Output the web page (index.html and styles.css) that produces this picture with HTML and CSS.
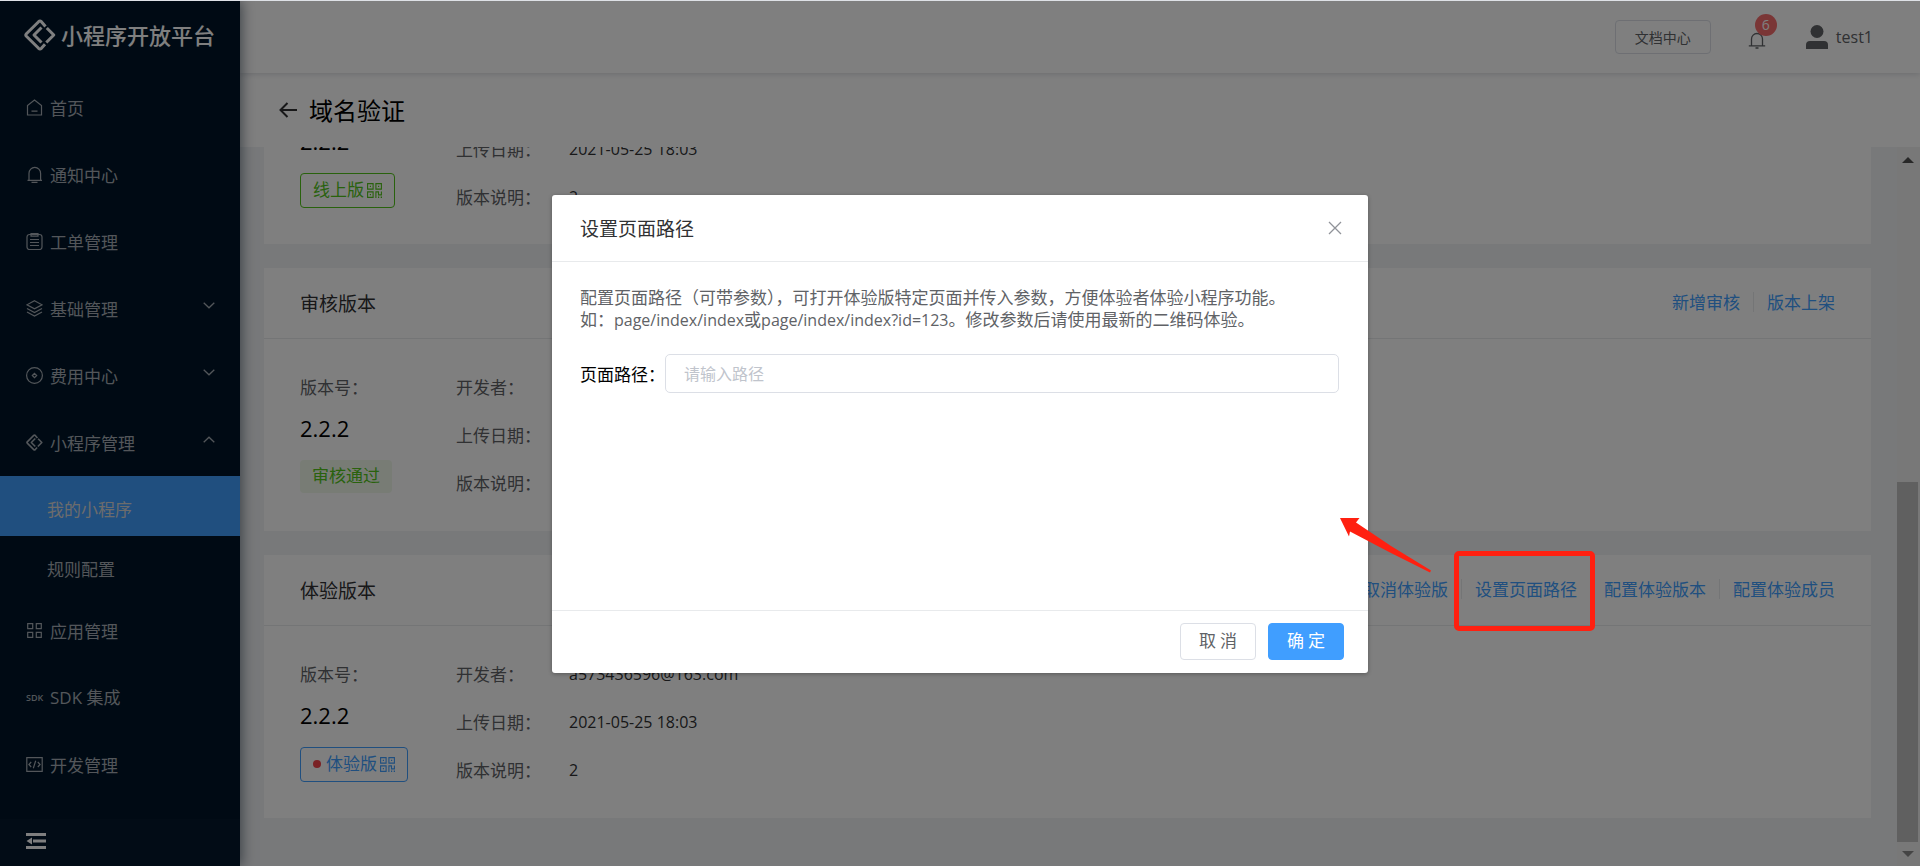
FILE: index.html
```html
<!DOCTYPE html>
<html lang="zh-CN">
<head>
<meta charset="utf-8">
<title>小程序开放平台</title>
<link rel="stylesheet" href="styles.css">
</head>
<body>
<svg class="defs" width="0" height="0" aria-hidden="true">
  <symbol id="qr" viewBox="0 0 15 15">
    <path fill="none" stroke="currentColor" stroke-width="1.1" d="M.6.6h5.5v5.5H.6zM8.900.6h5.500v5.500H8.900zM.6 8.900h5.500v5.500H.6zM8.900 15V8.900h2.600v3h2.900V8.500"/>
    <path fill="currentColor" d="M2.800 2.800h1.200v1.200H2.800zM11 2.800h1.200v1.200H11zM2.800 11h1.200v1.200H2.800zM11 13.600h1.200V15H11zM13.700 13.600H15V15h-1.300z"/>
  </symbol>
  <symbol id="brand" viewBox="0 0 32 32">
    <g fill="none" stroke="currentColor" stroke-width="3" stroke-linejoin="round">
      <path d="M21.500 7.500 17.400 2.700q-1.400-1.300-2.800 0L2.400 14.700q-1.200 1.300 0 2.600l12.200 12q1.400 1.300 2.800 0l3.600-4"/>
      <path d="M17.500 8.500 10 16l7.500 7.500"/>
      <path d="m22.800 9 7 7-7.500 7.500"/>
    </g>
  </symbol>
  <symbol id="down" viewBox="0 0 12 7"><path fill="none" stroke="currentColor" stroke-width="1.300" d="m.7.8 5.300 5 5.300-5"/></symbol>
</svg>

<div class="app">
  <aside class="side">
    <div class="logo"><svg width="32" height="32"><use href="#brand"/></svg><span>小程序开放平台</span></div>
    <nav class="menu">
      <a class="item" href="#"><svg class="ico" viewBox="0 0 17 17"><path d="M1.500 16V6.500l7-5.500 7 5.500V16zM5.500 12.200h6"/></svg>首页</a>
      <a class="item" href="#"><svg class="ico" viewBox="0 0 17 17"><path d="M3 14V7.200a5.800 5.800 0 0 1 11.600 0V14M1.500 14.300h14.500M5.500 16.300h6"/></svg>通知中心</a>
      <a class="item" href="#"><svg class="ico" viewBox="0 0 17 17"><rect x="1" y="1.500" width="15" height="15" rx="2.500"/><path d="M5 .7h7v2.500H5zM4 6.500h9M4 9.500h9M4 12.500h9"/></svg>工单管理</a>
      <a class="item" href="#"><svg class="ico" viewBox="0 0 17 17"><path d="m8.500.8 7.500 4-7.500 4-7.500-4zM1 8.500l7.500 4 7.500-4M1 12l7.500 4 7.500-4"/></svg>基础管理<svg class="chev" viewBox="0 0 12 7"><use href="#down"/></svg></a>
      <a class="item" href="#"><svg class="ico" viewBox="0 0 17 17"><circle cx="8.500" cy="8.500" r="7.900"/><path d="m8.500 6.300 2.200 2.200-2.200 2.200-2.200-2.200z"/></svg>费用中心<svg class="chev" viewBox="0 0 12 7"><use href="#down"/></svg></a>
      <a class="item" href="#"><svg class="ico brand" viewBox="0 0 32 32"><use href="#brand"/></svg>小程序管理<svg class="chev up" viewBox="0 0 12 7"><use href="#down"/></svg></a>
      <div class="sub">
        <a class="subitem active" href="#">我的小程序</a>
        <a class="subitem" href="#">规则配置</a>
      </div>
      <a class="item" href="#"><svg class="ico" viewBox="0 0 17 17"><path d="M1.700 1.700h5v5h-5zM10.300 1.700h5v5h-5zM1.700 10.300h5v5h-5zM10.300 10.300h5v5h-5z"/></svg>应用管理</a>
      <a class="item sdk-item" href="#"><span class="sdk">SDK</span>SDK 集成</a>
      <a class="item" href="#"><svg class="ico" viewBox="0 0 17 17"><path d="M.8 1.700h15.400v13.600H.8zM5.200 6 2.900 8.500 5.200 11M11.800 6l2.300 2.500-2.300 2.500M9.700 4.800 7.300 12.200"/></svg>开发管理</a>
    </nav>
    <div class="side-foot"><button class="fold" aria-label="收起菜单"><svg width="20" height="16" viewBox="0 0 20 16"><path fill="currentColor" d="M0 0h20v3H0zM7 6.500h13v3H7zM0 13h20v3H0zM6 4.500v7L.5 8z"/></svg></button></div>
  </aside>

  <div class="page">
    <header class="top">
      <button class="doc">文档中心</button>
      <button class="bell" aria-label="通知"><svg width="18" height="18" viewBox="0 0 18 18"><path fill="none" stroke="currentColor" stroke-width="1.300" d="M3.500 14.500V8a5.500 5.500 0 0 1 11 0v6.500M.8 14.800h16.400M7.500 17h3"/></svg><span class="badge">6</span></button>
      <div class="user"><svg width="22" height="24" viewBox="0 0 22 24"><circle cx="11" cy="6.500" r="6.500" fill="currentColor"/><path fill="currentColor" d="M0 24v-4q0-4 4-4h14q4 0 4 4v4z"/></svg><span>test1</span></div>
    </header>
    <div class="heading"><button class="back" aria-label="返回"><svg width="18" height="16" viewBox="0 0 18 16"><path fill="none" stroke="currentColor" stroke-width="2" d="M18 8H1.500M8.500 1 1.500 8l7 7"/></svg></button><h1>域名验证</h1></div>

    <div class="body">
      <main class="cards">
        <section class="card scrolled">
          <div class="card-body">
            <div class="ver"><span class="num">2.2.2</span><span class="tag line green">线上版<svg class="qr"><use href="#qr"/></svg></span></div>
            <dl class="info"><dt>上传日期：</dt><dd>2021-05-25 18:03</dd><dt>版本说明：</dt><dd>2</dd></dl>
          </div>
        </section>
        <section class="card">
          <div class="card-head"><h2>审核版本</h2><div class="acts"><a href="#">新增审核</a><a href="#">版本上架</a></div></div>
          <div class="card-body">
            <div class="ver"><span class="lab">版本号：</span><span class="num">2.2.2</span><span class="tag fill">审核通过</span></div>
            <dl class="info"><dt>开发者：</dt><dd></dd><dt>上传日期：</dt><dd></dd><dt>版本说明：</dt><dd></dd></dl>
          </div>
        </section>
        <section class="card">
          <div class="card-head"><h2>体验版本</h2><div class="acts"><a href="#">取消体验版</a><a href="#">设置页面路径</a><a href="#">配置体验版本</a><a href="#">配置体验成员</a></div></div>
          <div class="card-body">
            <div class="ver"><span class="lab">版本号：</span><span class="num">2.2.2</span><span class="tag line blue"><i class="dot"></i>体验版<svg class="qr"><use href="#qr"/></svg></span></div>
            <dl class="info"><dt>开发者：</dt><dd>a573436596@163.com</dd><dt>上传日期：</dt><dd>2021-05-25 18:03</dd><dt>版本说明：</dt><dd>2</dd></dl>
          </div>
        </section>
      </main>
      <div class="track" aria-hidden="true"><i class="tri"></i><i class="thumb"></i><i class="tri bottom"></i></div>
    </div>
  </div>

  <div class="mask">
    <div class="modal" role="dialog" aria-labelledby="dlg">
      <div class="modal-head"><h3 id="dlg">设置页面路径</h3><button class="close" aria-label="关闭"><svg width="14" height="14" viewBox="0 0 14 14"><path fill="none" stroke="currentColor" stroke-width="1.300" d="m1 1 12 12M13 1 1 13"/></svg></button></div>
      <div class="modal-body">
        <p>配置页面路径（可带参数），可打开体验版特定页面并传入参数，方便体验者体验小程序功能。<br>如：<span class="latin">page/index/index</span>或<span class="latin">page/index/index?id=123</span>。修改参数后请使用最新的二维码体验。</p>
        <div class="field"><label for="path">页面路径：</label><input id="path" type="text" placeholder="请输入路径"></div>
      </div>
      <div class="modal-foot"><button class="btn">取 消</button><button class="btn primary">确 定</button></div>
    </div>
  </div>
  <div class="frame"></div>
  <svg class="arrow" width="92" height="56" viewBox="0 0 92 56"><path fill="#ff2010" d="M0 0h19.500l-3.500 4.500L51 28 91 52.500 90 54.500 50 34.500 10 13.500l-1 5z"/></svg>
</div>
</body>
</html>
```
FILE: styles.css
```css
* { box-sizing: border-box; }
body { margin: 0; color: #303133; font: 400 17px/24px "Noto Sans CJK SC", sans-serif; }
h1, h2, h3, p, dl, dd { margin: 0; font-weight: inherit; }
a { color: inherit; text-decoration: none; }
button { padding: 0; border: 0; background: none; color: inherit; font: inherit; cursor: pointer; }
.defs { position: absolute; }
.latin { font-family: "Open Sans", "Noto Sans CJK SC", sans-serif; font-size: 16px; }

.app { position: relative; display: flex; height: 100vh; overflow: hidden; border-top: 1px solid #dee1e6; }
.side { position: relative; z-index: 1; display: flex; flex-direction: column; flex: none; width: 240px; background: #001529; box-shadow: 2px 0 12px rgba(0, 21, 41, .5); color: #a6adb4; }
.logo { display: flex; align-items: center; gap: 5px; height: 73px; padding: 0 24px 5px; color: #fff; font-size: 22px; font-weight: 500; }
.logo span { padding-bottom: 3px; }
.menu { flex: 1; }
.item { display: flex; align-items: center; height: 67px; padding: 0 26px; }
.ico { width: 17px; height: 17px; margin-right: 7px; fill: none; stroke: currentColor; stroke-width: 1.2; }
.brand { stroke: none; }
.chev { width: 12px; height: 7px; margin: 0 -1px 6px auto; }
.up { transform: rotate(180deg); }
.sdk-item { font-family: "Open Sans", "Noto Sans CJK SC", sans-serif; }
.sdk { width: 24px; font: 600 9px/16px "Open Sans", sans-serif; }
.sub { padding-bottom: 1px; }
.subitem { display: flex; align-items: center; height: 60px; padding: 5px 47px 0; }
.active { background: #409eff; color: #d9d9d9; }
.side-foot { display: flex; align-items: center; height: 47px; padding: 0 26px 3px; background: #04182d; color: #fff; }
.fold { display: flex; }

.page { display: flex; flex-direction: column; flex: 1; min-width: 0; }
.top { position: relative; display: flex; align-items: center; justify-content: flex-end; height: 72px; padding-right: 47px; background: #fff; box-shadow: 0 1px 6px rgba(0, 21, 41, .16); color: #606266; }
.doc { width: 96px; height: 34px; padding-bottom: 1px; border: 1px solid #dcdfe6; border-radius: 4px; font-size: 14px; }
.bell { position: relative; display: flex; margin: 6px 40px 0 37px; }
.badge { position: absolute; top: -17px; left: 7px; width: 22px; height: 22px; border-radius: 11px; background: #f56c6c; color: #fff; font: 400 14px/22px "Open Sans", sans-serif; }
.user { display: flex; align-items: center; gap: 8px; font: 400 16px/24px "Open Sans", sans-serif; }
.heading { display: flex; align-items: center; gap: 12px; height: 74px; padding-left: 39px; background: #fff; }
.heading h1 { color: #000; font-size: 24px; line-height: 32px; }
.back { display: flex; }

.body { display: flex; flex: 1; min-height: 0; background: #f0f2f5; }
.cards { display: flex; flex: 1; flex-direction: column; justify-content: flex-end; gap: 24px; min-width: 0; padding: 0 26px 48px 24px; overflow: hidden; }
.card { flex: none; background: #fff; }
.card-head { display: flex; align-items: center; justify-content: space-between; height: 71px; padding: 0 36px; border-bottom: 1px solid #e8eaec; }
.card-head h2 { font-size: 19px; }
.acts { display: flex; align-items: center; padding-bottom: 3px; color: #409eff; }
.acts a { line-height: 20px; }
.acts a + a { margin-left: 13px; padding-left: 13px; border-left: 1px solid #e8eaec; }
.card-body { display: flex; height: 192px; padding: 36px 36px 0; }
.ver { display: flex; flex-direction: column; align-items: flex-start; width: 156px; }
.lab, .info dt { color: #606266; }
.num { margin: 13px 0 16px; color: #000; font: 400 22px/32px "Open Sans", sans-serif; }
.tag { display: flex; align-items: center; height: 33px; padding: 0 12px 3px; border-radius: 4px; }
.fill { background: #f0f9eb; color: #52c41a; }
.line { height: 35px; border: 1px solid; }
.green { color: #52c41a; }
.blue { color: #409eff; }
.dot { width: 8px; height: 8px; margin: 2px 5px 0 0; border-radius: 4px; background: #f5454b; }
.qr { width: 15px; height: 15px; margin: 2px 0 0 3px; }
.info { display: grid; grid-template-columns: 113px auto; grid-auto-rows: 24px; gap: 24px 0; }
.info dd { font: 400 16px/24px "Open Sans", sans-serif; }
.scrolled .card-body { height: 119px; padding-top: 0; }
.scrolled .num { margin-top: 0; }
.scrolled .info { padding-top: 12px; }

.track { display: flex; flex-direction: column; align-items: center; width: 23px; padding: 10px 2px 9px 0; background: #f1f1f1; }
.tri { border: 6px solid transparent; border-top: 0; border-bottom-color: #505050; }
.thumb { width: 21px; height: 360px; margin: auto 0 9px; background: #c1c1c1; }
.tri.bottom { border-bottom-color: #8a8a8a; transform: rotate(180deg); }

.mask { position: absolute; inset: 0; z-index: 2; display: flex; align-items: flex-start; justify-content: center; padding-top: 194px; background: rgba(0, 0, 0, .5); }
.modal { display: flex; flex-direction: column; width: 816px; min-height: 478px; border-radius: 3px; background: #fff; box-shadow: 0 1px 4px rgba(0, 0, 0, .3); }
.modal-head { display: flex; align-items: center; justify-content: space-between; height: 67px; padding: 0 26px 0 28px; border-bottom: 1px solid #e8eaec; }
.modal-head h3 { font-size: 19px; }
.close { display: flex; color: #909399; }
.modal-body { flex: 1; padding: 24px 29px 0 28px; }
.modal-body p { color: #606266; line-height: 22px; }
.field { display: flex; align-items: center; margin-top: 23px; color: #000; }
.field label { flex: none; width: 85px; white-space: nowrap; }
.field input { flex: 1; min-width: 0; height: 39px; padding: 0 18px 2px; border: 1px solid #dcdfe6; border-radius: 5px; font: inherit; font-size: 16px; }
.field input::placeholder { color: #c0c4cc; }
.modal-foot { display: flex; align-items: center; justify-content: flex-end; gap: 12px; height: 63px; padding: 0 24px 1px; border-top: 1px solid #e8eaec; }
.btn { width: 76px; height: 37px; padding-bottom: 3px; border: 1px solid #dcdfe6; border-radius: 4px; color: #606266; }
.primary { border-color: #409eff; background: #409eff; color: #fff; }

.frame { position: absolute; top: 550px; left: 1454px; z-index: 3; width: 141px; height: 80px; border: 5px solid #ff2010; border-radius: 5px; }
.arrow { position: absolute; top: 517px; left: 1340px; z-index: 3; }
```
